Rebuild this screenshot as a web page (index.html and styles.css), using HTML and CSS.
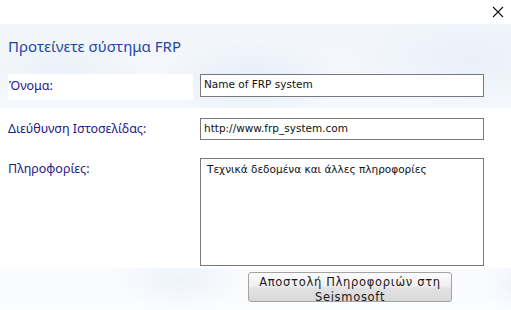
FILE: index.html
```html
<!DOCTYPE html>
<html lang="el">
<head>
<meta charset="utf-8">
<title>Προτείνετε σύστημα FRP</title>
<link rel="stylesheet" href="styles.css">
</head>
<body>
<div class="window">
  <div class="titlebar">
    <svg class="close" width="12" height="12" viewBox="0 0 12 12"><path d="M1 1 L11 11 M11 1 L1 11" stroke="#111" stroke-width="1.1" fill="none"/></svg>
  </div>
  <div class="heading">Προτείνετε σύστημα FRP</div>
  <div class="row row-name">
    <div class="label boxed">Όνομα:</div>
    <div class="field">Name of FRP system</div>
  </div>
  <div class="panel">
    <div class="row row-url">
      <div class="label">Διεύθυνση Ιστοσελίδας:</div>
      <div class="field">http://www.frp_system.com</div>
    </div>
    <div class="row row-info">
      <div class="label">Πληροφορίες:</div>
      <div class="field area">Τεχνικά δεδομένα και άλλες πληροφορίες</div>
    </div>
  </div>
  <div class="footer">
    <button class="send">Αποστολή Πληροφοριών στη Seismosoft</button>
  </div>
</div>
</body>
</html>
```

FILE: styles.css
```css
html, body {
  margin: 0;
  padding: 0;
}
body {
  width: 511px;
  height: 310px;
  overflow: hidden;
  font-family: "Noto Sans", "Open Sans", sans-serif;
}
.window {
  width: 511px;
  height: 310px;
  display: flex;
  flex-direction: column;
  background:
    radial-gradient(ellipse 90px 40px at 250px 80px, rgba(225,234,246,0.7), rgba(225,234,246,0) 100%),
    radial-gradient(ellipse 120px 50px at 470px 60px, rgba(228,236,247,0.6), rgba(228,236,247,0) 100%),
    radial-gradient(ellipse 80px 30px at 60px 70px, rgba(230,237,247,0.6), rgba(230,237,247,0) 100%),
    radial-gradient(ellipse 70px 30px at 180px 280px, rgba(232,239,248,0.7), rgba(232,239,248,0) 100%),
    radial-gradient(ellipse 60px 30px at 540px 285px, rgba(224,233,246,0.7), rgba(224,233,246,0) 100%),
    linear-gradient(180deg, #f1f5fb 0%, #f8fafd 60%, #fbfcfe 100%);
}
.titlebar {
  height: 24px;
  background: #ffffff;
  display: flex;
  justify-content: flex-end;
  align-items: flex-start;
  padding-right: 7px;
  box-sizing: border-box;
}
.close {
  margin-top: 6px;
}
.heading {
  height: 50px;
  box-sizing: border-box;
  padding: 12px 0 0 8px;
  line-height: 20px;
  font-size: 15px;
  color: #1d47a6;
  font-family: "Noto Sans", sans-serif;
}
.row {
  display: flex;
  align-items: flex-start;
  gap: 7px;
  padding-left: 8px;
}
.row-name {
  height: 26px;
}
.label {
  width: 185px;
  flex: none;
  font-size: 12.5px;
  color: #23208c;
  line-height: 16px;
  padding-top: 4px;
  box-sizing: border-box;
  white-space: nowrap;
}
.boxed {
  background: #ffffff;
  height: 26px;
  padding-left: 1px;
}
.field {
  width: 284px;
  height: 23px;
  box-sizing: border-box;
  border: 1px solid #7a7a7a;
  background: #ffffff;
  font-family: "DejaVu Sans", sans-serif;
  font-size: 10.5px;
  line-height: 19px;
  padding-left: 3px;
  color: #111;
  white-space: nowrap;
}
.panel {
  margin-top: 8px;
  background: #ffffff;
  height: 160px;
  padding-top: 10px;
  box-sizing: border-box;
  display: flex;
  flex-direction: column;
  gap: 18px;
}
.row-url .field {
  height: 22px;
  line-height: 18px;
}
.row-url .label {
  padding-top: 3px;
}
.row-info .label {
  padding-top: 3px;
}
.area {
  height: 108px;
  padding: 1px 0 0 6px;
  line-height: 18px;
}
.footer {
  flex: 1;
  display: flex;
  justify-content: flex-start;
  padding-left: 248px;
  padding-top: 4px;
  box-sizing: border-box;
}
.send {
  width: 204px;
  height: 30px;
  margin: 0;
  padding: 2px 4px 0;
  border: 1px solid #a3a3a3;
  border-radius: 3px;
  background: linear-gradient(180deg, #fbfbfb 0%, #f0f0f0 45%, #e2e2e2 55%, #d9d9d9 100%);
  font-family: "DejaVu Sans", sans-serif;
  font-size: 11.5px;
  letter-spacing: 0.7px;
  line-height: 15px;
  color: #1a1a1a;
  text-align: center;
  display: block;
  box-sizing: border-box;
}
```
